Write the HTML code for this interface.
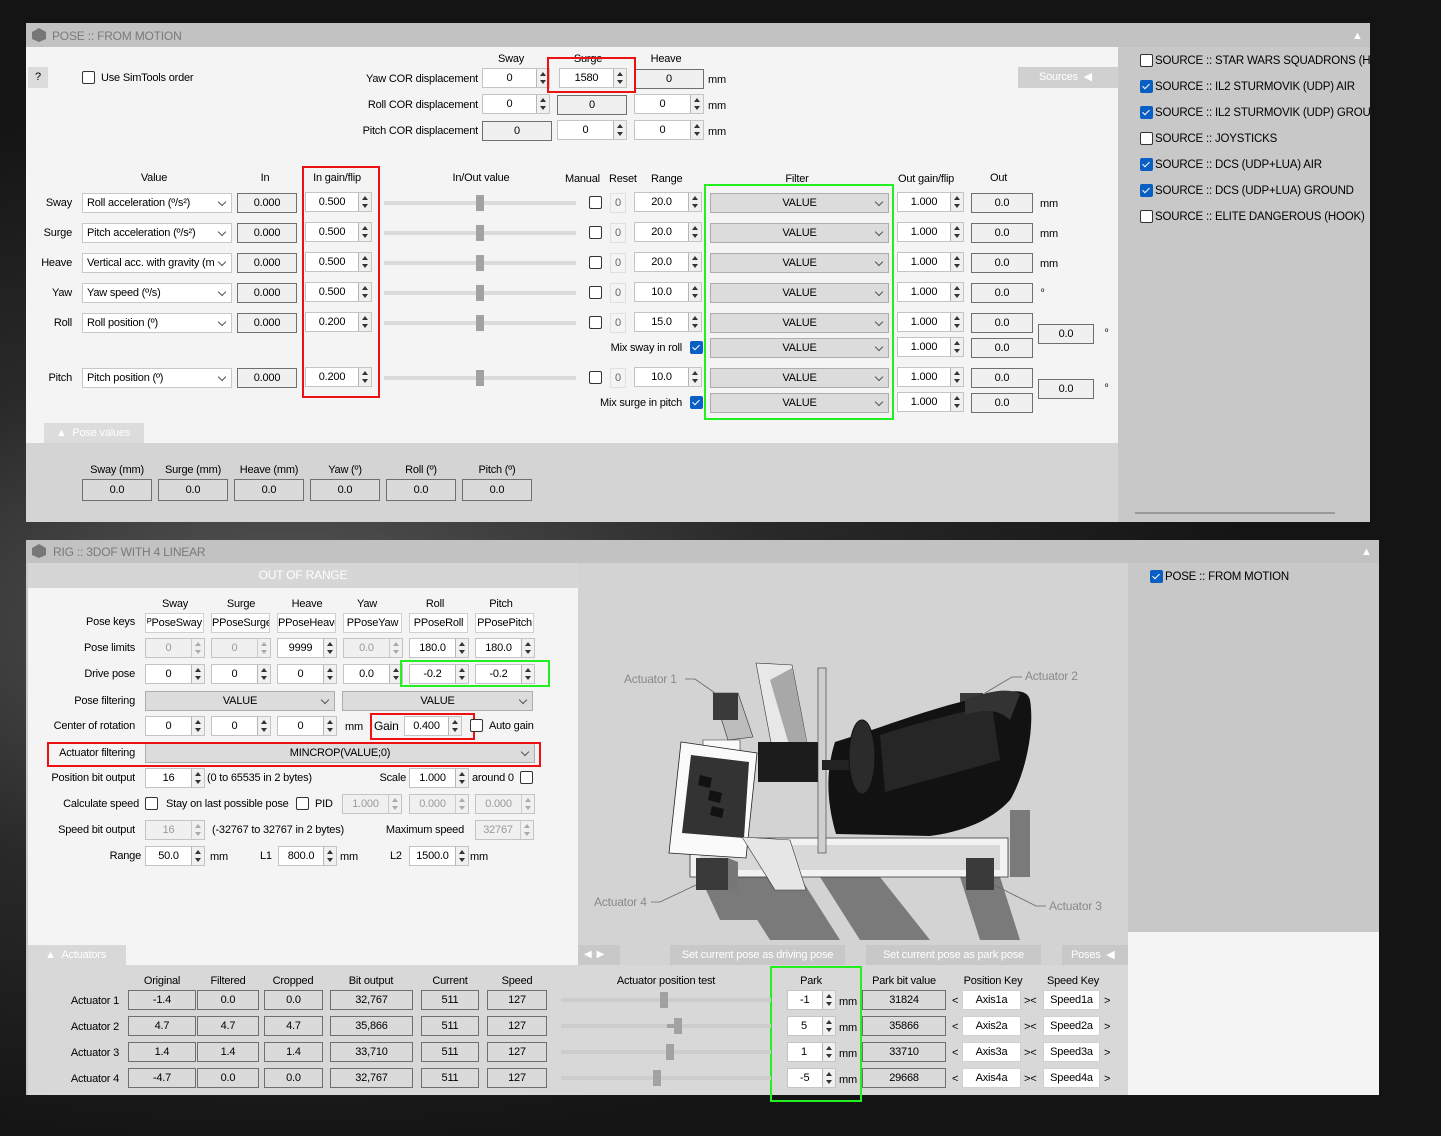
<!DOCTYPE html>
<html><head><meta charset="utf-8"><style>
*{box-sizing:border-box;margin:0;padding:0}
body{width:1441px;height:1136px;overflow:hidden;position:relative;font-family:"Liberation Sans",sans-serif;font-size:11px;letter-spacing:-0.2px;color:#000;
background:radial-gradient(ellipse at 20% 55%,#5a5a5a 0,#2a2a2a 30%,#141414 60%),#1a1a1a}
.a{position:absolute;line-height:14px;white-space:nowrap}
.r{text-align:right}.c{text-align:center}
.bx{position:absolute;height:20px;line-height:18px;text-align:center;overflow:hidden;white-space:nowrap}
.sp{position:absolute;height:20px;line-height:18px;text-align:center;padding-right:13px;border:1px solid #c4c4c4;background:linear-gradient(to left,#f0f0f0 12px,#b5b5b5 12px,#b5b5b5 13px,#fff 13px)}
.sp::before{content:"";position:absolute;right:3px;top:3px;border-left:3px solid transparent;border-right:3px solid transparent;border-bottom:4px solid #333}
.sp::after{content:"";position:absolute;right:3px;bottom:3px;border-left:3px solid transparent;border-right:3px solid transparent;border-top:4px solid #333}
.sp.d{color:#9a9a9a;background:linear-gradient(to left,#f0f0f0 12px,#ccc 12px,#ccc 13px,#f0f0f0 13px)}
.sp.d::before{border-bottom-color:#aaa}.sp.d::after{border-top-color:#aaa}
.ro{border:1px solid #6f6f6f;background:#f0f0f0}
.ro2{border:1px solid #6f6f6f;background:#dadada}
.tx{border:1px solid #d0d0d0;background:#fff}
.cb{position:absolute;height:20px;line-height:18px;border:1px solid #c8c8c8;background:#fff;padding-left:4px;overflow:hidden;white-space:nowrap}
.cb::after{content:"";position:absolute;right:6px;top:5px;width:5px;height:5px;border-right:1px solid #555;border-bottom:1px solid #555;transform:rotate(45deg)}
.fc{text-align:center;padding-left:0;background:#dcdcdc;border-color:#adadad}
.ck{position:absolute;width:13px;height:13px;border:1px solid #333;background:#fff;border-radius:2px}
.ck.on{background:#0a5fc4;border-color:#0a5fc4}
.ck.on::after{content:"";position:absolute;left:3px;top:1px;width:3px;height:6px;border-right:1px solid #fff;border-bottom:1px solid #fff;transform:rotate(45deg)}
.red{position:absolute;border:2px solid #ee1111}
.grn{position:absolute;border:2px solid #22ee22}
.trk{position:absolute;height:4px;background:#dadada}
.th{position:absolute;width:8px;height:16px;background:#a2a2a2}
.w{color:#fff}
.g{color:#7a7a7a}
</style></head><body>

<!-- ===== TOP PANEL ===== -->
<div class="a" style="left:26px;top:23px;width:1344px;height:499px;background:#c8c8c8"></div>
<div class="a" style="left:26px;top:23px;width:1344px;height:24px;background:#c2c2c2"></div>
<svg class="a" style="left:31px;top:27px" width="16" height="16"><polygon points="8,1 15,5 15,12 8,15 1,12 1,5" fill="#777"/></svg>
<div class="a g" style="left:52px;top:29px;font-size:12px">POSE :: FROM MOTION</div>
<div class="a" style="left:1352px;top:29px;color:#fff;font-size:11px">▲</div>
<div class="a" style="left:26px;top:47px;width:1092px;height:396px;background:#f4f4f4"></div>
<div class="a" style="left:26px;top:443px;width:1092px;height:79px;background:#d4d4d4"></div>
<div class="a" style="left:1135px;top:512px;width:200px;height:2px;background:#9a9a9a"></div>

<div class="a c" style="left:28px;top:67px;width:20px;height:21px;background:#dcdcdc;line-height:21px">?</div>
<div class="ck" style="left:82px;top:71px"></div>
<div class="a" style="left:101px;top:71px">Use SimTools order</div>
<div class="a w" style="left:1018px;top:67px;width:100px;height:21px;background:#d0d0d0;line-height:21px;padding-left:21px">Sources&nbsp;&nbsp;◀</div>

<div class="a c" style="left:482px;top:52px;width:58px">Sway</div>
<div class="a c" style="left:559px;top:52px;width:58px">Surge</div>
<div class="a c" style="left:637px;top:52px;width:58px">Heave</div>
<div class="a r" style="left:300px;top:72px;width:178px">Yaw COR displacement</div>
<div class="a r" style="left:300px;top:98px;width:178px">Roll COR displacement</div>
<div class="a r" style="left:300px;top:124px;width:178px">Pitch COR displacement</div>
<div class="sp" style="left:482px;top:68px;width:68px">0</div>
<div class="sp" style="left:559px;top:68px;width:68px">1580</div>
<div class="bx ro" style="left:634px;top:69px;width:70px">0</div>
<div class="sp" style="left:482px;top:94px;width:68px">0</div>
<div class="bx ro" style="left:557px;top:95px;width:70px">0</div>
<div class="sp" style="left:634px;top:94px;width:70px">0</div>
<div class="bx ro" style="left:482px;top:121px;width:70px">0</div>
<div class="sp" style="left:557px;top:120px;width:70px">0</div>
<div class="sp" style="left:634px;top:120px;width:70px">0</div>
<div class="a" style="left:708px;top:73px">mm</div>
<div class="a" style="left:708px;top:99px">mm</div>
<div class="a" style="left:708px;top:125px">mm</div>
<div class="red" style="left:547px;top:57px;width:89px;height:36px"></div>

<!-- headers -->
<div class="a c" style="left:104px;top:171px;width:100px">Value</div>
<div class="a c" style="left:245px;top:171px;width:40px">In</div>
<div class="a c" style="left:302px;top:171px;width:70px">In gain/flip</div>
<div class="a c" style="left:431px;top:171px;width:100px">In/Out value</div>
<div class="a" style="left:565px;top:172px">Manual</div>
<div class="a" style="left:609px;top:172px">Reset</div>
<div class="a" style="left:651px;top:172px">Range</div>
<div class="a c" style="left:747px;top:172px;width:100px">Filter</div>
<div class="a" style="left:898px;top:172px">Out gain/flip</div>
<div class="a" style="left:990px;top:171px">Out</div>

<!-- row Sway y203 -->
<div class="a r" style="left:20px;top:196px;width:52px">Sway</div>
<div class="cb" style="left:82px;top:193px;width:150px">Roll acceleration (º/s²)</div>
<div class="bx ro" style="left:237px;top:193px;width:60px">0.000</div>
<div class="sp" style="left:305px;top:192px;width:67px">0.500</div>
<div class="trk" style="left:384px;top:201px;width:192px"></div><div class="th" style="left:476px;top:195px"></div>
<div class="ck" style="left:589px;top:196px"></div>
<div class="bx" style="left:610px;top:193px;width:16px;border:1px solid #e0e0e0;color:#666">0</div>
<div class="sp" style="left:634px;top:192px;width:68px">20.0</div>
<div class="cb fc" style="left:710px;top:193px;width:179px">VALUE</div>
<div class="sp" style="left:897px;top:192px;width:67px">1.000</div>
<div class="bx ro" style="left:971px;top:193px;width:62px">0.0</div>
<div class="a" style="left:1040px;top:197px">mm</div>

<!-- Surge y233 -->
<div class="a r" style="left:20px;top:226px;width:52px">Surge</div>
<div class="cb" style="left:82px;top:223px;width:150px">Pitch acceleration (º/s²)</div>
<div class="bx ro" style="left:237px;top:223px;width:60px">0.000</div>
<div class="sp" style="left:305px;top:222px;width:67px">0.500</div>
<div class="trk" style="left:384px;top:231px;width:192px"></div><div class="th" style="left:476px;top:225px"></div>
<div class="ck" style="left:589px;top:226px"></div>
<div class="bx" style="left:610px;top:223px;width:16px;border:1px solid #e0e0e0;color:#666">0</div>
<div class="sp" style="left:634px;top:222px;width:68px">20.0</div>
<div class="cb fc" style="left:710px;top:223px;width:179px">VALUE</div>
<div class="sp" style="left:897px;top:222px;width:67px">1.000</div>
<div class="bx ro" style="left:971px;top:223px;width:62px">0.0</div>
<div class="a" style="left:1040px;top:227px">mm</div>

<!-- Heave y263 -->
<div class="a r" style="left:20px;top:256px;width:52px">Heave</div>
<div class="cb" style="left:82px;top:253px;width:150px">Vertical acc. with gravity (m</div>
<div class="bx ro" style="left:237px;top:253px;width:60px">0.000</div>
<div class="sp" style="left:305px;top:252px;width:67px">0.500</div>
<div class="trk" style="left:384px;top:261px;width:192px"></div><div class="th" style="left:476px;top:255px"></div>
<div class="ck" style="left:589px;top:256px"></div>
<div class="bx" style="left:610px;top:253px;width:16px;border:1px solid #e0e0e0;color:#666">0</div>
<div class="sp" style="left:634px;top:252px;width:68px">20.0</div>
<div class="cb fc" style="left:710px;top:253px;width:179px">VALUE</div>
<div class="sp" style="left:897px;top:252px;width:67px">1.000</div>
<div class="bx ro" style="left:971px;top:253px;width:62px">0.0</div>
<div class="a" style="left:1040px;top:257px">mm</div>

<!-- Yaw y293 -->
<div class="a r" style="left:20px;top:286px;width:52px">Yaw</div>
<div class="cb" style="left:82px;top:283px;width:150px">Yaw speed (º/s)</div>
<div class="bx ro" style="left:237px;top:283px;width:60px">0.000</div>
<div class="sp" style="left:305px;top:282px;width:67px">0.500</div>
<div class="trk" style="left:384px;top:291px;width:192px"></div><div class="th" style="left:476px;top:285px"></div>
<div class="ck" style="left:589px;top:286px"></div>
<div class="bx" style="left:610px;top:283px;width:16px;border:1px solid #e0e0e0;color:#666">0</div>
<div class="sp" style="left:634px;top:282px;width:68px">10.0</div>
<div class="cb fc" style="left:710px;top:283px;width:179px">VALUE</div>
<div class="sp" style="left:897px;top:282px;width:67px">1.000</div>
<div class="bx ro" style="left:971px;top:283px;width:62px">0.0</div>
<div class="a" style="left:1041px;top:285px;font-size:9px">º</div>

<!-- Roll y323 -->
<div class="a r" style="left:20px;top:316px;width:52px">Roll</div>
<div class="cb" style="left:82px;top:313px;width:150px">Roll position (º)</div>
<div class="bx ro" style="left:237px;top:313px;width:60px">0.000</div>
<div class="sp" style="left:305px;top:312px;width:67px">0.200</div>
<div class="trk" style="left:384px;top:321px;width:192px"></div><div class="th" style="left:476px;top:315px"></div>
<div class="ck" style="left:589px;top:316px"></div>
<div class="bx" style="left:610px;top:313px;width:16px;border:1px solid #e0e0e0;color:#666">0</div>
<div class="sp" style="left:634px;top:312px;width:68px">15.0</div>
<div class="cb fc" style="left:710px;top:313px;width:179px">VALUE</div>
<div class="sp" style="left:897px;top:312px;width:67px">1.000</div>
<div class="bx ro" style="left:971px;top:313px;width:62px">0.0</div>
<div class="bx ro" style="left:1038px;top:324px;width:56px">0.0</div>
<div class="a" style="left:1105px;top:325px;font-size:9px">º</div>
<!-- mix sway y348 -->
<div class="a r" style="left:560px;top:341px;width:122px">Mix sway in roll</div>
<div class="ck on" style="left:690px;top:341px"></div>
<div class="cb fc" style="left:710px;top:338px;width:179px">VALUE</div>
<div class="sp" style="left:897px;top:337px;width:67px">1.000</div>
<div class="bx ro" style="left:971px;top:338px;width:62px">0.0</div>

<!-- Pitch y378 -->
<div class="a r" style="left:20px;top:371px;width:52px">Pitch</div>
<div class="cb" style="left:82px;top:368px;width:150px">Pitch position (º)</div>
<div class="bx ro" style="left:237px;top:368px;width:60px">0.000</div>
<div class="sp" style="left:305px;top:367px;width:67px">0.200</div>
<div class="trk" style="left:384px;top:376px;width:192px"></div><div class="th" style="left:476px;top:370px"></div>
<div class="ck" style="left:589px;top:371px"></div>
<div class="bx" style="left:610px;top:368px;width:16px;border:1px solid #e0e0e0;color:#666">0</div>
<div class="sp" style="left:634px;top:367px;width:68px">10.0</div>
<div class="cb fc" style="left:710px;top:368px;width:179px">VALUE</div>
<div class="sp" style="left:897px;top:367px;width:67px">1.000</div>
<div class="bx ro" style="left:971px;top:368px;width:62px">0.0</div>
<div class="bx ro" style="left:1038px;top:379px;width:56px">0.0</div>
<div class="a" style="left:1105px;top:380px;font-size:9px">º</div>
<!-- mix surge y403 -->
<div class="a r" style="left:560px;top:396px;width:122px">Mix surge in pitch</div>
<div class="ck on" style="left:690px;top:396px"></div>
<div class="cb fc" style="left:710px;top:393px;width:179px">VALUE</div>
<div class="sp" style="left:897px;top:392px;width:67px">1.000</div>
<div class="bx ro" style="left:971px;top:393px;width:62px">0.0</div>

<div class="red" style="left:302px;top:166px;width:78px;height:232px"></div>
<div class="grn" style="left:704px;top:184px;width:190px;height:236px"></div>

<!-- pose values -->
<div class="a w" style="left:44px;top:423px;width:100px;height:20px;background:#dcdcdc;line-height:20px;padding-left:12px">▲&nbsp;&nbsp;Pose values</div>
<div class="a c" style="left:82px;top:463px;width:70px">Sway (mm)</div>
<div class="a c" style="left:158px;top:463px;width:70px">Surge (mm)</div>
<div class="a c" style="left:234px;top:463px;width:70px">Heave (mm)</div>
<div class="a c" style="left:310px;top:463px;width:70px">Yaw (º)</div>
<div class="a c" style="left:386px;top:463px;width:70px">Roll (º)</div>
<div class="a c" style="left:462px;top:463px;width:70px">Pitch (º)</div>
<div class="bx ro2" style="left:82px;top:479px;width:70px;height:22px;line-height:20px">0.0</div>
<div class="bx ro2" style="left:158px;top:479px;width:70px;height:22px;line-height:20px">0.0</div>
<div class="bx ro2" style="left:234px;top:479px;width:70px;height:22px;line-height:20px">0.0</div>
<div class="bx ro2" style="left:310px;top:479px;width:70px;height:22px;line-height:20px">0.0</div>
<div class="bx ro2" style="left:386px;top:479px;width:70px;height:22px;line-height:20px">0.0</div>
<div class="bx ro2" style="left:462px;top:479px;width:70px;height:22px;line-height:20px">0.0</div>

<!-- sources -->
<div class="a" style="left:1118px;top:47px;width:252px;height:200px;overflow:hidden">
<div class="ck" style="left:22px;top:7px"></div><div class="a" style="left:37px;top:7px;font-size:11.5px">SOURCE :: STAR WARS SQUADRONS (HOOK)</div>
<div class="ck on" style="left:22px;top:33px"></div><div class="a" style="left:37px;top:33px;font-size:11.5px">SOURCE :: IL2 STURMOVIK (UDP) AIR</div>
<div class="ck on" style="left:22px;top:59px"></div><div class="a" style="left:37px;top:59px;font-size:11.5px">SOURCE :: IL2 STURMOVIK (UDP) GROUND</div>
<div class="ck" style="left:22px;top:85px"></div><div class="a" style="left:37px;top:85px;font-size:11.5px">SOURCE :: JOYSTICKS</div>
<div class="ck on" style="left:22px;top:111px"></div><div class="a" style="left:37px;top:111px;font-size:11.5px">SOURCE :: DCS (UDP+LUA) AIR</div>
<div class="ck on" style="left:22px;top:137px"></div><div class="a" style="left:37px;top:137px;font-size:11.5px">SOURCE :: DCS (UDP+LUA) GROUND</div>
<div class="ck" style="left:22px;top:163px"></div><div class="a" style="left:37px;top:163px;font-size:11.5px">SOURCE :: ELITE DANGEROUS (HOOK)</div>
</div>

<!-- ===== BOTTOM PANEL ===== -->
<div class="a" style="left:26px;top:540px;width:1353px;height:555px;background:#c8c8c8"></div>
<div class="a" style="left:26px;top:540px;width:1353px;height:23px;background:#c2c2c2"></div>
<svg class="a" style="left:31px;top:543px" width="16" height="16"><polygon points="8,1 15,5 15,12 8,15 1,12 1,5" fill="#777"/></svg>
<div class="a g" style="left:53px;top:545px;font-size:12px">RIG :: 3DOF WITH 4 LINEAR</div>
<div class="a" style="left:1361px;top:545px;color:#fff">▲</div>
<div class="a w c" style="left:28px;top:563px;width:550px;height:25px;background:#d6d6d6;line-height:25px;font-size:12px">OUT OF RANGE</div>
<div class="a" style="left:28px;top:588px;width:550px;height:357px;background:#f4f4f4"></div>
<div class="a" style="left:126px;top:945px;width:452px;height:20px;background:#f4f4f4"></div>
<div class="a" style="left:578px;top:563px;width:550px;height:402px;background:#d3d3d3"></div>
<div class="a" style="left:1128px;top:932px;width:251px;height:163px;background:#f4f4f4"></div>
<div class="a" style="left:28px;top:965px;width:1100px;height:130px;background:#d8d8d8"></div>
<div class="ck on" style="left:1150px;top:570px"></div>
<div class="a" style="left:1165px;top:570px;font-size:11.5px">POSE :: FROM MOTION</div>

<!-- rig grid -->
<div class="a c" style="left:145px;top:597px;width:60px">Sway</div>
<div class="a c" style="left:211px;top:597px;width:60px">Surge</div>
<div class="a c" style="left:277px;top:597px;width:60px">Heave</div>
<div class="a c" style="left:343px;top:597px;width:48px">Yaw</div>
<div class="a c" style="left:409px;top:597px;width:52px">Roll</div>
<div class="a c" style="left:475px;top:597px;width:52px">Pitch</div>
<div class="a r" style="left:30px;top:615px;width:105px">Pose keys</div>
<div class="a r" style="left:30px;top:641px;width:105px">Pose limits</div>
<div class="a r" style="left:30px;top:667px;width:105px">Drive pose</div>
<div class="a r" style="left:30px;top:694px;width:105px">Pose filtering</div>
<div class="a r" style="left:30px;top:719px;width:105px">Center of rotation</div>
<div class="a r" style="left:30px;top:746px;width:105px">Actuator filtering</div>
<div class="a r" style="left:30px;top:771px;width:105px">Position bit output</div>
<div class="a r" style="left:30px;top:797px;width:109px">Calculate speed</div>
<div class="a r" style="left:30px;top:823px;width:105px">Speed bit output</div>
<div class="a r" style="left:30px;top:849px;width:111px">Range</div>

<div class="bx tx" style="left:145px;top:613px;width:59px">ᴾPoseSway</div>
<div class="bx tx" style="left:211px;top:613px;width:59px">PPoseSurge</div>
<div class="bx tx" style="left:277px;top:613px;width:59px">PPoseHeave</div>
<div class="bx tx" style="left:343px;top:613px;width:59px">PPoseYaw</div>
<div class="bx tx" style="left:409px;top:613px;width:59px">PPoseRoll</div>
<div class="bx tx" style="left:475px;top:613px;width:59px">PPosePitch</div>

<div class="sp d" style="left:145px;top:638px;width:60px">0</div>
<div class="sp d" style="left:211px;top:638px;width:60px">0</div>
<div class="sp" style="left:277px;top:638px;width:60px">9999</div>
<div class="sp d" style="left:343px;top:638px;width:60px">0.0</div>
<div class="sp" style="left:409px;top:638px;width:60px">180.0</div>
<div class="sp" style="left:475px;top:638px;width:60px">180.0</div>

<div class="sp" style="left:145px;top:664px;width:60px">0</div>
<div class="sp" style="left:211px;top:664px;width:60px">0</div>
<div class="sp" style="left:277px;top:664px;width:60px">0</div>
<div class="sp" style="left:343px;top:664px;width:60px">0.0</div>
<div class="sp" style="left:409px;top:664px;width:60px">-0.2</div>
<div class="sp" style="left:475px;top:664px;width:60px">-0.2</div>
<div class="grn" style="left:400px;top:660px;width:150px;height:27px"></div>

<div class="cb fc" style="left:145px;top:691px;width:190px">VALUE</div>
<div class="cb fc" style="left:342px;top:691px;width:191px">VALUE</div>

<div class="sp" style="left:145px;top:716px;width:60px">0</div>
<div class="sp" style="left:211px;top:716px;width:60px">0</div>
<div class="sp" style="left:277px;top:716px;width:60px">0</div>
<div class="a" style="left:345px;top:720px">mm</div>
<div class="a" style="left:374px;top:719px;font-size:12px">Gain</div>
<div class="sp" style="left:404px;top:716px;width:58px">0.400</div>
<div class="red" style="left:370px;top:713px;width:105px;height:27px"></div>
<div class="ck" style="left:470px;top:719px"></div>
<div class="a" style="left:489px;top:719px">Auto gain</div>

<div class="cb fc" style="left:145px;top:743px;width:390px">MINCROP(VALUE;0)</div>
<div class="red" style="left:47px;top:742px;width:494px;height:25px"></div>

<div class="sp" style="left:145px;top:768px;width:60px">16</div>
<div class="a" style="left:207px;top:771px">(0 to 65535 in 2 bytes)</div>
<div class="a r" style="left:350px;top:771px;width:56px">Scale</div>
<div class="sp" style="left:409px;top:768px;width:60px">1.000</div>
<div class="a" style="left:472px;top:771px">around 0</div>
<div class="ck" style="left:520px;top:771px"></div>

<div class="ck" style="left:145px;top:797px"></div>
<div class="a" style="left:166px;top:797px">Stay on last possible pose</div>
<div class="ck" style="left:296px;top:797px"></div>
<div class="a" style="left:315px;top:797px">PID</div>
<div class="sp d" style="left:342px;top:794px;width:60px">1.000</div>
<div class="sp d" style="left:409px;top:794px;width:60px">0.000</div>
<div class="sp d" style="left:475px;top:794px;width:60px">0.000</div>

<div class="sp d" style="left:145px;top:820px;width:60px">16</div>
<div class="a" style="left:212px;top:823px">(-32767 to 32767 in 2 bytes)</div>
<div class="a r" style="left:360px;top:823px;width:104px">Maximum speed</div>
<div class="sp d" style="left:475px;top:820px;width:59px">32767</div>

<div class="sp" style="left:145px;top:846px;width:60px">50.0</div>
<div class="a" style="left:210px;top:850px">mm</div>
<div class="a" style="left:260px;top:849px">L1</div>
<div class="sp" style="left:278px;top:846px;width:59px">800.0</div>
<div class="a" style="left:340px;top:850px">mm</div>
<div class="a" style="left:390px;top:849px">L2</div>
<div class="sp" style="left:409px;top:846px;width:60px">1500.0</div>
<div class="a" style="left:470px;top:850px">mm</div>

<!-- 3D view -->
<svg class="a" style="left:578px;top:563px" width="550" height="382" viewBox="578 563 550 382">
<g fill="#7a7a7a">
<polygon points="730,877 800,877 840,940 770,940"/>
<polygon points="820,877 880,877 930,940 860,940"/>
<polygon points="700,877 750,877 760,920 720,920"/>
<polygon points="960,877 1000,877 1020,940 980,940"/>
<polygon points="1010,810 1030,810 1030,877 1010,877"/>
</g>
<polygon points="690,838 1008,838 1008,877 690,877" fill="#f2f2f2" stroke="#333" stroke-width="0.8"/>
<polygon points="700,845 1000,845 1000,870 700,870" fill="#d8d8d8"/>
<polygon points="703,740 740,740 740,845 703,845" fill="#fafafa" stroke="#333" stroke-width="0.6"/>
<polygon points="713,693 738,693 753,737 728,740" fill="#bdbdbd" stroke="#333" stroke-width="0.6"/>
<polygon points="713,693 738,693 738,720 713,720" fill="#3a3a3a"/>
<polygon points="960,700 983,700 990,760 968,770" fill="#9a9a9a"/>
<polygon points="960,693 983,693 983,713 960,713" fill="#3a3a3a"/>
<path d="M835,742 C880,728 930,708 985,696 L1008,692 C1020,690 1028,692 1030,700 C1035,730 1025,775 1010,800 C990,822 960,832 930,836 L836,834 C826,800 826,770 835,742 Z" fill="#121212"/>
<path d="M880,735 C920,722 960,712 992,706 L1000,760 C960,772 920,782 885,792 Z" fill="#262626"/>
<path d="M965,700 C990,690 1010,688 1020,694 L1010,720 C1000,710 985,708 965,715 Z" fill="#333"/>
<polygon points="756,663 792,665 808,748 772,748" fill="#e8e8e8" stroke="#333" stroke-width="0.6"/>
<polygon points="770,680 792,668 808,748 790,748" fill="#a8a8a8"/>
<polygon points="681,742 757,753 746,858 669,853" fill="#fafafa" stroke="#222" stroke-width="0.8"/>
<polygon points="691,755 749,762 744,838 682,833" fill="#333"/>
<polygon points="700,775 712,778 710,788 698,785" fill="#111"/>
<polygon points="710,790 722,793 720,803 708,800" fill="#111"/>
<polygon points="712,806 724,809 722,818 710,815" fill="#111"/>
<polygon points="742,837 790,840 806,890 775,890" fill="#e6e6e6" stroke="#333" stroke-width="0.6"/>
<rect x="758" y="742" width="66" height="40" fill="#1c1c1c"/>
<rect x="818" y="668" width="8" height="185" fill="#cfcfcf" stroke="#333" stroke-width="0.6"/>
<rect x="822" y="760" width="40" height="10" fill="#222"/>
<ellipse cx="862" cy="757" rx="13" ry="37" fill="#2b2b2b" stroke="#111"/>
<polygon points="696,858 728,858 728,890 696,890" fill="#3a3a3a"/>
<polygon points="728,858 738,862 738,893 728,890" fill="#777"/>
<polygon points="966,858 994,858 994,890 966,890" fill="#3a3a3a"/>
<g stroke="#666" stroke-width="0.8" fill="none">
<polyline points="685,679 695,679 715,693"/>
<polyline points="1022,677 1012,677 985,693"/>
<polyline points="651,902 660,902 696,885"/>
<polyline points="1046,906 1036,906 994,885"/>
</g>
<g fill="#8a8a8a" font-family="Liberation Sans,sans-serif" font-size="12">
<text x="624" y="683">Actuator 1</text>
<text x="1025" y="680">Actuator 2</text>
<text x="594" y="906">Actuator 4</text>
<text x="1049" y="910">Actuator 3</text>
</g>
</svg>

<!-- bottom bar -->
<div class="a w" style="left:28px;top:945px;width:98px;height:20px;background:#d8d8d8;line-height:20px;padding-left:17px">▲&nbsp;&nbsp;Actuators</div>
<div class="a w" style="left:578px;top:945px;width:42px;height:20px;background:#c8c8c8;line-height:20px;padding-left:6px;font-size:10px">◀&nbsp;&nbsp;▶</div>
<div class="a w c" style="left:670px;top:945px;width:175px;height:20px;background:#c8c8c8;line-height:20px">Set current pose as driving pose</div>
<div class="a w c" style="left:866px;top:945px;width:175px;height:20px;background:#c8c8c8;line-height:20px">Set current pose as park pose</div>
<div class="a w" style="left:1062px;top:945px;width:66px;height:20px;background:#c8c8c8;line-height:20px;padding-left:9px">Poses&nbsp;&nbsp;◀</div>

<!-- actuators table -->
<div class="a c" style="left:128px;top:974px;width:68px">Original</div>
<div class="a c" style="left:197px;top:974px;width:62px">Filtered</div>
<div class="a c" style="left:263px;top:974px;width:60px">Cropped</div>
<div class="a c" style="left:329px;top:974px;width:84px">Bit output</div>
<div class="a c" style="left:421px;top:974px;width:58px">Current</div>
<div class="a c" style="left:487px;top:974px;width:60px">Speed</div>
<div class="a c" style="left:600px;top:974px;width:132px">Actuator position test</div>
<div class="a c" style="left:787px;top:974px;width:48px">Park</div>
<div class="a c" style="left:862px;top:974px;width:84px">Park bit value</div>
<div class="a c" style="left:958px;top:974px;width:70px">Position Key</div>
<div class="a c" style="left:1038px;top:974px;width:70px">Speed Key</div>
<div class="a grn" style="left:770px;top:966px;width:92px;height:136px"></div>

<div class="a r" style="left:40px;top:994px;width:79px">Actuator 1</div>
<div class="a r" style="left:40px;top:1020px;width:79px">Actuator 2</div>
<div class="a r" style="left:40px;top:1046px;width:79px">Actuator 3</div>
<div class="a r" style="left:40px;top:1072px;width:79px">Actuator 4</div>

<div class="bx ro2" style="left:128px;top:990px;width:68px">-1.4</div>
<div class="bx ro2" style="left:197px;top:990px;width:62px">0.0</div>
<div class="bx ro2" style="left:264px;top:990px;width:59px">0.0</div>
<div class="bx ro2" style="left:330px;top:990px;width:83px">32,767</div>
<div class="bx ro2" style="left:421px;top:990px;width:58px">511</div>
<div class="bx ro2" style="left:487px;top:990px;width:60px">127</div>
<div class="bx ro2" style="left:128px;top:1016px;width:68px">4.7</div>
<div class="bx ro2" style="left:197px;top:1016px;width:62px">4.7</div>
<div class="bx ro2" style="left:264px;top:1016px;width:59px">4.7</div>
<div class="bx ro2" style="left:330px;top:1016px;width:83px">35,866</div>
<div class="bx ro2" style="left:421px;top:1016px;width:58px">511</div>
<div class="bx ro2" style="left:487px;top:1016px;width:60px">127</div>
<div class="bx ro2" style="left:128px;top:1042px;width:68px">1.4</div>
<div class="bx ro2" style="left:197px;top:1042px;width:62px">1.4</div>
<div class="bx ro2" style="left:264px;top:1042px;width:59px">1.4</div>
<div class="bx ro2" style="left:330px;top:1042px;width:83px">33,710</div>
<div class="bx ro2" style="left:421px;top:1042px;width:58px">511</div>
<div class="bx ro2" style="left:487px;top:1042px;width:60px">127</div>
<div class="bx ro2" style="left:128px;top:1068px;width:68px">-4.7</div>
<div class="bx ro2" style="left:197px;top:1068px;width:62px">0.0</div>
<div class="bx ro2" style="left:264px;top:1068px;width:59px">0.0</div>
<div class="bx ro2" style="left:330px;top:1068px;width:83px">32,767</div>
<div class="bx ro2" style="left:421px;top:1068px;width:58px">511</div>
<div class="bx ro2" style="left:487px;top:1068px;width:60px">127</div>

<div class="trk" style="left:561px;top:998px;width:210px;background:#cdcdcd"></div><div class="th" style="left:660px;top:992px"></div>
<div class="trk" style="left:561px;top:1024px;width:210px;background:#cdcdcd"></div><div class="th" style="left:674px;top:1018px"></div><div class="a" style="left:667px;top:1024px;width:7px;height:4px;background:#a2a2a2"></div>
<div class="trk" style="left:561px;top:1050px;width:210px;background:#cdcdcd"></div><div class="th" style="left:666px;top:1044px"></div>
<div class="trk" style="left:561px;top:1076px;width:210px;background:#cdcdcd"></div><div class="th" style="left:653px;top:1070px"></div>

<div class="sp" style="left:787px;top:990px;width:49px;text-align:left;padding-left:12px">-1</div>
<div class="sp" style="left:787px;top:1016px;width:49px;text-align:left;padding-left:13px">5</div>
<div class="sp" style="left:787px;top:1042px;width:49px;text-align:left;padding-left:13px">1</div>
<div class="sp" style="left:787px;top:1068px;width:49px;text-align:left;padding-left:12px">-5</div>
<div class="a" style="left:839px;top:995px">mm</div>
<div class="a" style="left:839px;top:1021px">mm</div>
<div class="a" style="left:839px;top:1047px">mm</div>
<div class="a" style="left:839px;top:1073px">mm</div>

<div class="bx ro2" style="left:862px;top:990px;width:84px">31824</div>
<div class="bx ro2" style="left:862px;top:1016px;width:84px">35866</div>
<div class="bx ro2" style="left:862px;top:1042px;width:84px">33710</div>
<div class="bx ro2" style="left:862px;top:1068px;width:84px">29668</div>

<div class="a" style="left:952px;top:994px">&lt;</div><div class="bx tx" style="left:962px;top:990px;width:59px">Axis1a</div><div class="a" style="left:1024px;top:994px">&gt;&lt;</div><div class="bx tx" style="left:1043px;top:990px;width:57px">Speed1a</div><div class="a" style="left:1104px;top:994px">&gt;</div>
<div class="a" style="left:952px;top:1020px">&lt;</div><div class="bx tx" style="left:962px;top:1016px;width:59px">Axis2a</div><div class="a" style="left:1024px;top:1020px">&gt;&lt;</div><div class="bx tx" style="left:1043px;top:1016px;width:57px">Speed2a</div><div class="a" style="left:1104px;top:1020px">&gt;</div>
<div class="a" style="left:952px;top:1046px">&lt;</div><div class="bx tx" style="left:962px;top:1042px;width:59px">Axis3a</div><div class="a" style="left:1024px;top:1046px">&gt;&lt;</div><div class="bx tx" style="left:1043px;top:1042px;width:57px">Speed3a</div><div class="a" style="left:1104px;top:1046px">&gt;</div>
<div class="a" style="left:952px;top:1072px">&lt;</div><div class="bx tx" style="left:962px;top:1068px;width:59px">Axis4a</div><div class="a" style="left:1024px;top:1072px">&gt;&lt;</div><div class="bx tx" style="left:1043px;top:1068px;width:57px">Speed4a</div><div class="a" style="left:1104px;top:1072px">&gt;</div>

</body></html>
